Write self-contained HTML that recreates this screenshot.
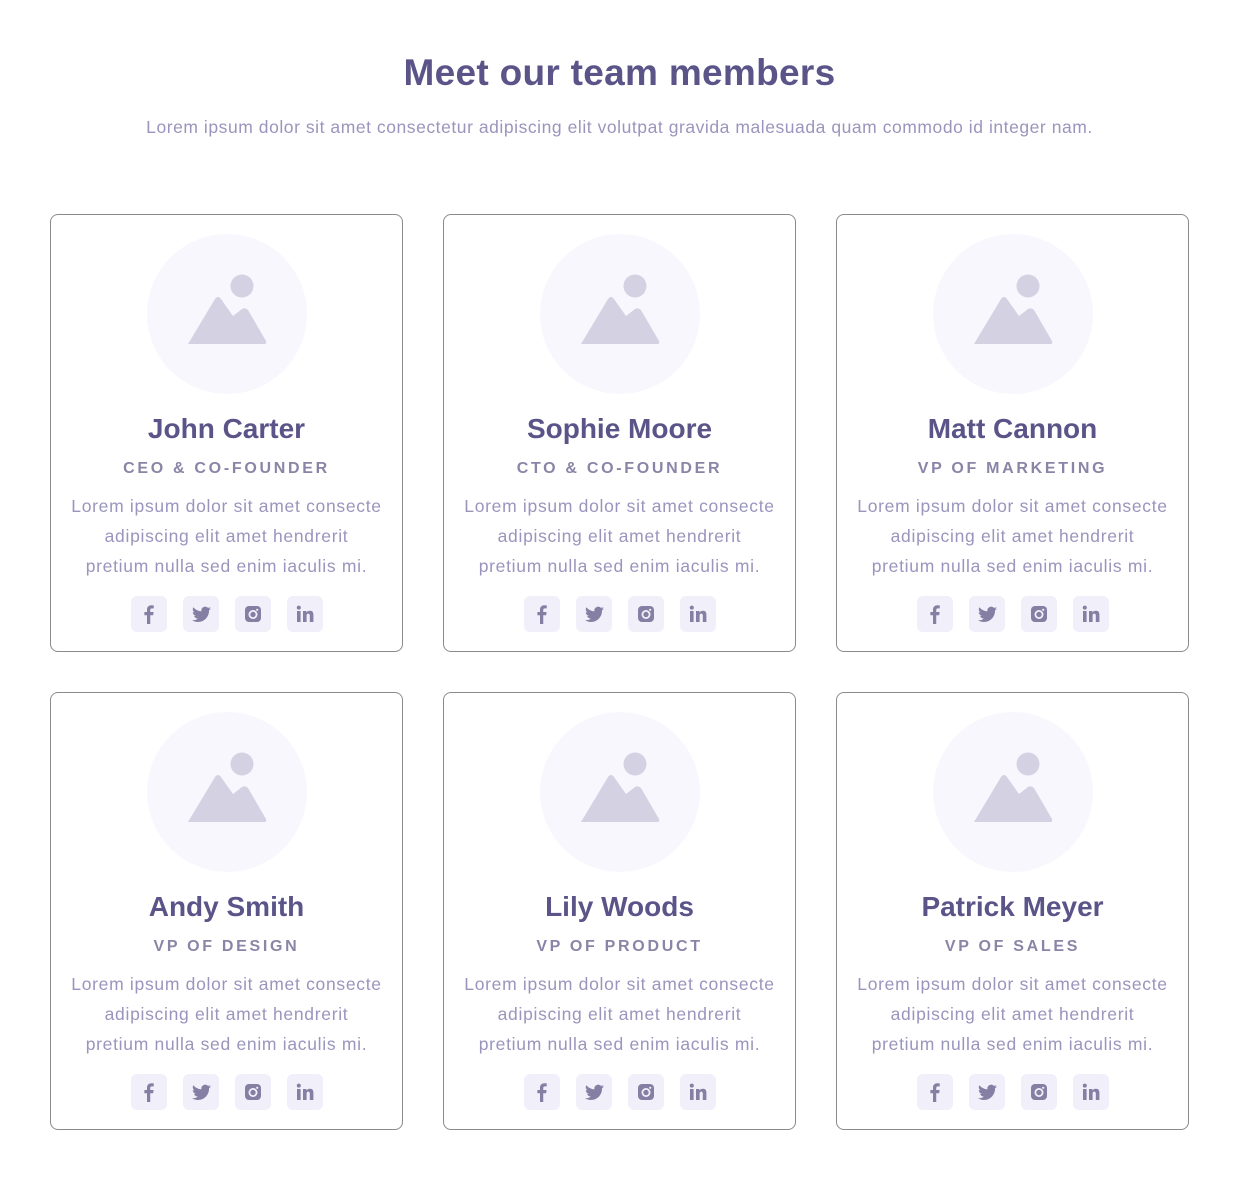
<!DOCTYPE html>
<html><head><meta charset="utf-8"><style>
*{box-sizing:border-box;margin:0;padding:0}
body{width:1239px;height:1180px;background:#fff;font-family:"Liberation Sans",sans-serif;position:relative}
h1{position:absolute;top:52px;left:0;width:100%;text-align:center;font-size:37px;font-weight:bold;color:#5b5488;letter-spacing:0.3px}
.sub{position:absolute;top:117px;left:0;width:100%;text-align:center;font-size:17.5px;color:#9a95bd;letter-spacing:0.55px}
.card{position:absolute;width:353px;height:438px;border:1px solid #8a8a8a;border-radius:8px;text-align:center}
.circ{position:absolute;left:96px;top:19px;width:160px;height:160px;border-radius:50%;background:#f8f7fd}
.circ svg{position:absolute;left:0;top:0}
.name{position:absolute;top:198px;width:100%;font-size:28px;font-weight:bold;color:#5b5488}
.role{position:absolute;top:245px;width:100%;font-size:16px;font-weight:bold;color:#8a85a6;letter-spacing:2.7px}
.txt{position:absolute;top:276px;width:100%;font-size:17.5px;line-height:30px;color:#9a95bd;letter-spacing:0.7px}
.icons{position:absolute;top:381px;left:80px;display:flex;gap:16px}
.icons div{width:36px;height:36px;border-radius:6px;background:#f1effa;display:flex;align-items:center;justify-content:center}
</style></head><body>
<h1>Meet our team members</h1>
<div class="sub">Lorem ipsum dolor sit amet consectetur adipiscing elit volutpat gravida malesuada quam commodo id integer nam.</div>
<div class="card" style="left:50px;top:214px"><div class="circ"><svg width="160" height="160"><circle cx="95" cy="52" r="11.5" fill="#d4d1e3"/><path d="M41 110 L68 65 Q71 61 74 65 L86 82 L95 75 Q98 73 101 76 L119 107 Q120 110 117 110 Z" fill="#d4d1e3"/></svg></div><div class="name">John Carter</div><div class="role">CEO &amp; CO-FOUNDER</div><div class="txt">Lorem ipsum dolor sit amet consecte<br>adipiscing elit amet hendrerit<br>pretium nulla sed enim iaculis mi.</div><div class="icons"><div><svg width="20" height="20" viewBox="0 0 16 16"><path d="M9 16V9h2.3l.4-2.6H9V4.8c0-.8.3-1.3 1.4-1.3h1.4V1.2C11.4 1.1 10.7 1 9.9 1 8 1 6.4 2.2 6.4 4.4v2H4.3V9h2.1v7z" fill="#8580a3"/></svg></div><div><svg width="19" height="17" viewBox="0 0 24 20"><path d="M24 2.4c-.9.4-1.8.6-2.8.8 1-.6 1.8-1.6 2.2-2.7-1 .6-2 1-3.1 1.2A4.9 4.9 0 0 0 11.9 6 14 14 0 0 1 1.7.9a4.9 4.9 0 0 0 1.5 6.6c-.8 0-1.6-.3-2.200-.6 0 2.4 1.7 4.4 3.9 4.8-.7.2-1.5.2-2.2.1.6 2 2.4 3.4 4.6 3.4A9.9 9.9 0 0 1 0 17.2 14 14 0 0 0 7.5 19.4c9.1 0 14-7.5 14-14v-.6c1-.7 1.8-1.6 2.5-2.4z" fill="#8580a3"/></svg></div><div><svg width="18" height="18" viewBox="0 0 18 18"><rect x="1" y="1" width="16" height="16" rx="4" fill="#8580a3"/><circle cx="9" cy="9.5" r="3.6" fill="none" stroke="#f1effa" stroke-width="1.8"/><circle cx="13.2" cy="4.8" r="1.1" fill="#f1effa"/></svg></div><div><svg width="18" height="18" viewBox="0 0 18 18"><rect x="1" y="6" width="3.6" height="11" fill="#8580a3"/><circle cx="2.8" cy="2.6" r="2" fill="#8580a3"/><path d="M7 6h3.4v1.6C11 6.6 12.2 5.8 14 5.8c2.6 0 3.4 1.7 3.4 4.2V17h-3.6v-6.2c0-1.3-.4-2.2-1.6-2.2s-1.6 1-1.6 2.2V17H7z" fill="#8580a3"/></svg></div></div></div>
<script>
var src=document.querySelector('.card');
var data=[[443,214,"Sophie Moore","CTO &amp; CO-FOUNDER"],[836,214,"Matt Cannon","VP OF MARKETING"],[50,692,"Andy Smith","VP OF DESIGN"],[443,692,"Lily Woods","VP OF PRODUCT"],[836,692,"Patrick Meyer","VP OF SALES"]];
data.forEach(function(d){var c=src.cloneNode(true);c.style.left=d[0]+'px';c.style.top=d[1]+'px';c.querySelector('.name').innerHTML=d[2];c.querySelector('.role').innerHTML=d[3];document.body.appendChild(c);});
</script>
</body></html>
